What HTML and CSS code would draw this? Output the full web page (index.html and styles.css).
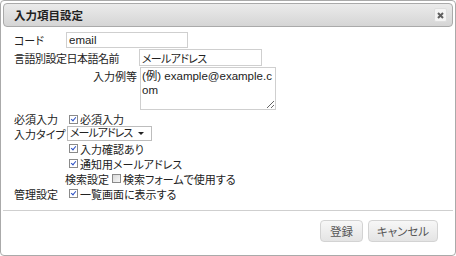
FILE: index.html
```html
<!DOCTYPE html>
<html lang="ja">
<head>
  <meta charset="UTF-8">
  <meta name="viewport" content="width=device-width, initial-scale=1.0">
  <title>入力項目設定</title>
  <link rel="stylesheet" href="styles.css">
</head>
<body>
  <div class="dialog">
    <div class="titlebar">
      <span class="title">入力項目設定</span>
      <button class="close" title="閉じる">
        <svg width="7" height="7" viewBox="0 0 7 7"><path d="M1 1L6 6M6 1L1 6" stroke="#5f5f5f" stroke-width="2"/></svg>
      </button>
    </div>

    <div class="content">
      <div class="row r1">
        <span class="label">コード</span>
        <input type="text" class="text code" value="email">
      </div>
      <div class="row r2">
        <span class="label wide">言語別設定日本語名前</span>
        <input type="text" class="text name" value="メールアドレス">
      </div>
      <div class="row r3">
        <span class="label wide sub">入力例等</span>
        <textarea class="example">(例) example@example.com</textarea>
      </div>

      <div class="row r4">
        <span class="label">必須入力</span>
        <label class="check"><input type="checkbox" checked>必須入力</label>
      </div>
      <div class="row r5">
        <span class="label">入力タイプ</span>
        <div class="select" role="combobox">メールアドレス</div>
      </div>
      <div class="row indent">
        <label class="check"><input type="checkbox" checked>入力確認あり</label>
      </div>
      <div class="row indent">
        <label class="check"><input type="checkbox" checked>通知用メールアドレス</label>
      </div>
      <div class="row search">
        <span>検索設定</span>
        <label class="check"><input type="checkbox">検索フォームで使用する</label>
      </div>
      <div class="row">
        <span class="label">管理設定</span>
        <label class="check"><input type="checkbox" checked>一覧画面に表示する</label>
      </div>
    </div>

    <div class="buttonpane">
      <button class="btn save">登録</button>
      <button class="btn cancel">キャンセル</button>
    </div>
  </div>
</body>
</html>
```

FILE: styles.css
```css
body {
  margin: 0;
  font-family: "Liberation Sans", "Noto Sans CJK JP", sans-serif;
  font-size: 11px;
  color: #222;
  font-feature-settings: "palt";
  background: #fff;
}

.dialog {
  box-sizing: border-box;
  width: 456px;
  height: 256px;
  border: 1px solid #aaa;
  border-radius: 4px;
  padding: 2px;
  display: flex;
  flex-direction: column;
  background: #fff;
}

/* title bar */
.titlebar {
  height: 22px;
  border: 1px solid #aaa;
  border-radius: 4px;
  background: linear-gradient(#ebebeb, #d5d5d5);
  display: flex;
  align-items: center;
  justify-content: space-between;
  padding: 0 5px 0 10px;
}

.title {
  font-weight: bold;
  font-size: 11.5px;
  color: #222;
}

.close {
  box-sizing: border-box;
  width: 13px;
  height: 14px;
  padding: 0;
  border: 1px solid #dedede;
  border-radius: 2px;
  background: #f4f4f4;
  display: flex;
  align-items: center;
  justify-content: center;
}

/* form */
.content {
  flex: 1;
  padding: 5px 0 0 11px;
}

.row {
  display: flex;
  align-items: center;
  height: 15px;
}
.r1 { height: 16px; margin-bottom: 1px; }
.r2 { height: 17px; }
.r3 { height: 43px; margin-top: 1px; align-items: flex-start; }
.r4 { height: 14px; margin-top: 2px; }

.label {
  width: 52px;
  flex: none;
}
.label.wide { width: 125px; letter-spacing: -0.5px; }
.label.sub {
  text-align: right;
  box-sizing: border-box;
  padding: 1px 2px 0 0;
  letter-spacing: 0;
}

.text {
  box-sizing: border-box;
  height: 100%;
  border: 1px solid #cfcfcf;
  padding: 0 2px;
  font-family: "Liberation Sans", "Noto Sans CJK JP", sans-serif;
  font-size: 11.5px;
  color: #222;
  font-feature-settings: "palt";
}
.code { width: 122px; }
.name { width: 123px; font-size: 11px; letter-spacing: -0.7px; }

.example {
  box-sizing: border-box;
  width: 136px;
  height: 43px;
  margin: 0 0 0 1px;
  border: 1px solid #cfcfcf;
  padding: 1px;
  font-family: "Liberation Sans", "Noto Sans CJK JP", sans-serif;
  font-size: 11.5px;
  line-height: 14px;
  color: #222;
  font-feature-settings: "palt";
  word-break: break-all;
  resize: both;
}

.check {
  display: flex;
  align-items: center;
}

.check input {
  appearance: none;
  box-sizing: border-box;
  width: 9px;
  height: 9px;
  margin: 0 2px 0 3px;
  border: 1px solid #8a8a8a;
  background: linear-gradient(135deg, #d8d8d8, #f7f7f7);
  position: relative;
}
.check input:checked {
  background: #fff;
}
.check input:checked::after {
  content: "";
  position: absolute;
  left: 2px;
  top: 0;
  width: 2px;
  height: 4px;
  border: solid #2b50c4;
  border-width: 0 1.5px 1.5px 0;
  transform: rotate(40deg);
}

.select {
  position: relative;
  box-sizing: border-box;
  width: 85px;
  height: 15px;
  margin-left: 1px;
  border: 1px solid #bdbdbd;
  background: #fff;
  padding: 0 0 0 2px;
  line-height: 13px;
  letter-spacing: -1px;
  color: #222;
}

.select::after {
  content: "";
  position: absolute;
  right: 7px;
  top: 5px;
  border: 3px solid transparent;
  border-top: 3px solid #222;
  border-bottom: 0;
}

.indent { padding-left: 52px; }
.search { padding-left: 51px; }

/* buttons */
.buttonpane {
  box-sizing: border-box;
  height: 43px;
  border-top: 1px solid #cfcfcf;
  padding: 9px 15px 0 0;
  display: flex;
  justify-content: flex-end;
  align-items: flex-start;
  gap: 5px;
}

.btn {
  height: 22px;
  border: 1px solid #d3d3d3;
  border-radius: 4px;
  background: linear-gradient(#f7f7f7, #e4e4e4);
  color: #555;
  font-family: "Liberation Sans", "Noto Sans CJK JP", sans-serif;
  font-size: 11.5px;
  font-feature-settings: "palt";
  padding: 0;
}
.save { width: 43px; }
.cancel { width: 70px; }
```
